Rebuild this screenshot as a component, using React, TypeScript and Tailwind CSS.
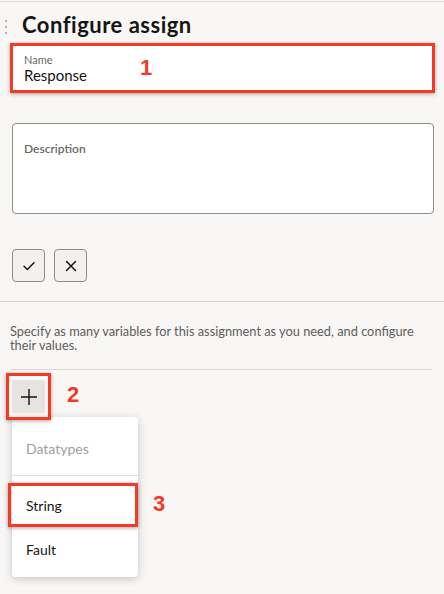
import React from "react";

const RED = "border-[#f23a24]";

export default function App() {
  return (
    <div className="relative w-[444px] h-[594px] overflow-hidden bg-[#f8f7f6] font-['Lato','Noto_Sans',sans-serif] text-[#161513]">
      <div className="h-[1px] mt-[1px] bg-[#dedcda]" />

      {/* Header */}
      <div className="flex items-center h-[24px] mt-[11px]">
        <div className="flex flex-col gap-[4px] ml-[5px] w-[3px] mt-[4px]">
          <span className="block w-[2px] h-[2px] rounded-full bg-[#9c9a97]" />
          <span className="block w-[2px] h-[2px] rounded-full bg-[#9c9a97]" />
          <span className="block w-[2px] h-[2px] rounded-full bg-[#9c9a97]" />
        </div>
        <h1 className="ml-[14px] text-[22px] leading-[24px] font-bold tracking-[0.5px]">Configure assign</h1>
      </div>

      {/* Name field with annotation */}
      <div className={`relative mt-[6px] ml-[10px] w-[425px] h-[50px] border-[3px] ${RED} bg-white shadow-[0_1px_4px_rgba(0,0,0,0.35)]`}>
        <div className="pl-[11px] pt-[7px]">
          <div className="text-[11px] leading-[13px] text-[#6b6966]">Name</div>
          <div className="text-[15px] leading-[18px] text-[#161513]">Response</div>
        </div>
        <span className="absolute left-[127px] top-[10px] text-[22px] leading-[24px] font-bold text-[#f23a24] font-['Liberation_Sans',sans-serif]">1</span>
      </div>

      {/* Description */}
      <div className="mt-[30px] ml-[12px] w-[422px] h-[91px] border border-[#8e8c89] rounded-[4px] bg-white">
        <div className="pl-[11px] pt-[17px] text-[12px] leading-[16px] font-semibold text-[#6b6966]">Description</div>
      </div>

      {/* Buttons */}
      <div className="flex gap-[9px] ml-[12px] mt-[35px]">
        <button className="flex items-center justify-center w-[33px] h-[33px] border border-[#8e8c89] rounded-[4px] bg-[#f2f1f0]">
          <svg width="14" height="14" viewBox="0 0 14 14" fill="none">
            <path d="M2 7.3 L5.3 10.5 L12 3.8" stroke="#161513" strokeWidth="1.5" strokeLinecap="round" strokeLinejoin="round" />
          </svg>
        </button>
        <button className="flex items-center justify-center w-[33px] h-[33px] border border-[#8e8c89] rounded-[4px] bg-[#f2f1f0]">
          <svg width="14" height="14" viewBox="0 0 14 14" fill="none">
            <path d="M2.5 2.5 L11.5 11.5 M11.5 2.5 L2.5 11.5" stroke="#161513" strokeWidth="1.5" strokeLinecap="round" />
          </svg>
        </button>
      </div>

      <div className="mt-[19px] h-[1px] bg-[#d6d4d1]" />

      {/* Help text */}
      <p className="mt-[22px] ml-[10px] w-[424px] text-[12.8px] leading-[14px] text-[#5f5d5a]">
        Specify as many variables for this assignment as you need, and configure their values.
      </p>

      <div className="mt-[17px] ml-[11px] w-[421px] h-[1px] bg-[#dcdad7]" />

      {/* Add button with annotation */}
      <div className="relative flex items-center mt-[3px] ml-[6px] h-[47px]">
        <div className={`relative z-10 flex items-center justify-center w-[45px] h-[47px] border-[3px] ${RED} shadow-[0_1px_4px_rgba(0,0,0,0.35)]`}>
          <div className="flex items-center justify-center w-[33px] h-[33px] bg-[#e6e4e2] rounded-[2px]">
            <svg width="18" height="18" viewBox="0 0 18 18" fill="none">
              <path d="M9 1 V17 M1 9 H17" stroke="#161513" strokeWidth="1.4" />
            </svg>
          </div>
        </div>
        <span className="ml-[16px] -mt-[4px] text-[22px] leading-[24px] font-bold text-[#f23a24] font-['Liberation_Sans',sans-serif]">2</span>
      </div>

      {/* Dropdown menu */}
      <div className="absolute left-[12px] top-[417px] w-[126px] h-[160px] bg-white rounded-[4px] shadow-[0_2px_8px_rgba(0,0,0,0.2)]">
        <div className="flex items-center h-[58px] pl-[14px] pt-[4px] text-[14px] text-[#a09e9b]">Datatypes</div>
        <div className="h-[1px] bg-[#dedcda]" />
        <div className="h-[7px]" />
        <div className="relative flex items-center h-[44px] pl-[14px] text-[14px] text-[#161513]">
          <div className={`absolute -left-[4px] right-0 top-0 bottom-0 border-[3px] ${RED} shadow-[0_1px_4px_rgba(0,0,0,0.35)]`} />
          <span className="relative">String</span>
          <span className="absolute left-[141px] top-[9px] text-[22px] leading-[24px] font-bold text-[#f23a24] font-['Liberation_Sans',sans-serif]">3</span>
        </div>
        <div className="flex items-center h-[44px] pl-[14px] text-[14px] text-[#161513]">Fault</div>
      </div>
    </div>
  );
}
